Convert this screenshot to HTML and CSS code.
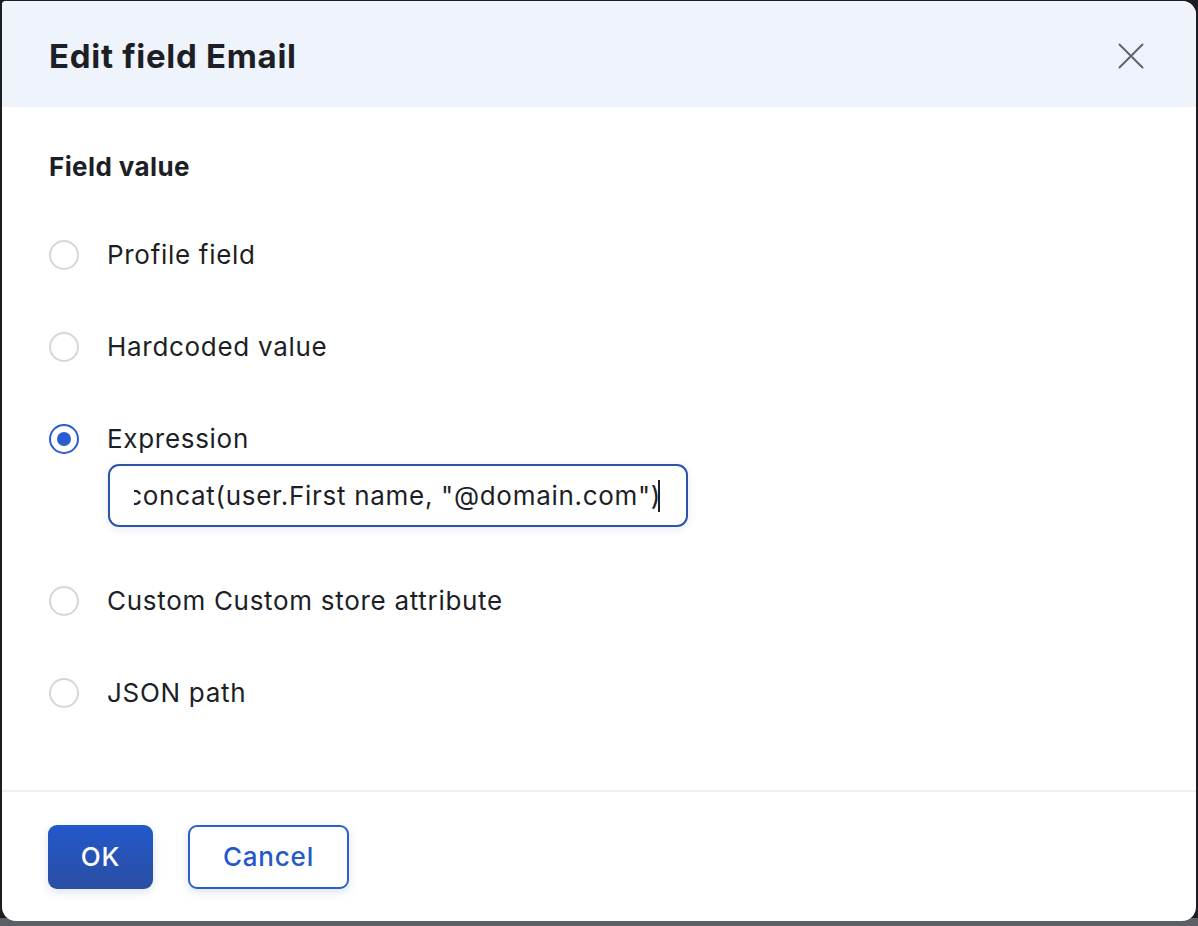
FILE: index.html
```html
<!DOCTYPE html>
<html lang="en">
<head>
  <meta charset="UTF-8">
  <title>Edit field Email</title>
  <link rel="stylesheet" href="styles.css">
</head>
<body>

  <div class="dialog">
    <header class="dialog-head">
      <h1>Edit field Email</h1>
      <button class="close" type="button" aria-label="Close">
        <svg width="26" height="26" viewBox="0 0 26 26">
          <path d="M1.5 1.5 L24.5 24.5 M24.5 1.5 L1.5 24.5" stroke="#60646d" stroke-width="2" stroke-linecap="round" fill="none"/>
        </svg>
      </button>
    </header>

    <section class="dialog-body">
      <h2>Field value</h2>

      <label class="option">
        <span class="radio"></span>
        <span class="label">Profile field</span>
      </label>

      <label class="option">
        <span class="radio"></span>
        <span class="label">Hardcoded value</span>
      </label>

      <label class="option option-expr">
        <span class="radio checked"></span>
        <span class="label">Expression</span>
      </label>
      <div class="expr-input">
        <div class="expr-scroll">
          <span class="expr-text">concat(user.First name, "@domain.com")</span><span class="caret"></span>
        </div>
      </div>

      <label class="option">
        <span class="radio"></span>
        <span class="label">Custom Custom store attribute</span>
      </label>

      <label class="option">
        <span class="radio"></span>
        <span class="label">JSON path</span>
      </label>
    </section>

    <footer class="dialog-foot">
      <button class="btn btn-primary" type="button">OK</button>
      <button class="btn btn-outline" type="button">Cancel</button>
    </footer>
  </div>

</body>
</html>
```

FILE: styles.css
```css
html, body {
  height: 100%;
}

body {
  margin: 0;
  background: linear-gradient(to bottom, #1b1d22 0, #1b1d22 918px, #5c6066 918px);
  font-family: Inter, 'Noto Sans', sans-serif;
  color: #1d1f27;
  overflow: hidden;
}

.dialog {
  margin: 1px 2px 0 2px;
  height: 920px;
  background: white;
  border-radius: 4px 14px 14px 14px;
  overflow: hidden;
  display: flex;
  flex-direction: column;
}

.dialog-head {
  height: 106px;
  box-sizing: border-box;
  background-color: #eff3fb;
  display: flex;
  align-items: center;
  justify-content: space-between;
  padding: 3px 52px 0 47px;
}

.dialog-head h1 {
  margin: 0;
  font-size: 33px;
  font-weight: 700;
  letter-spacing: 0.7px;
}

.close {
  background: none;
  border: none;
  padding: 0;
  width: 26px;
  height: 26px;
  cursor: pointer;
}

.dialog-body {
  flex: 1;
  padding: 44px 47px 0;
  border-bottom: 2px solid #f0f0f0;
}

.dialog-body h2 {
  margin: 0 0 56px;
  font-size: 26px;
  font-weight: 700;
  line-height: 32px;
  letter-spacing: 0.4px;
}

.option {
  display: flex;
  align-items: center;
  gap: 28px;
  height: 32px;
  margin-bottom: 60px;
  cursor: pointer;
}

.option-expr {
  margin-bottom: 9px;
}

.radio {
  width: 26px;
  height: 26px;
  border: 2px solid #d6d6d8;
  border-radius: 50%;
  flex-shrink: 0;
  position: relative;
}

.radio.checked {
  border-color: #2a5bd0;
}

.radio.checked::after {
  content: '';
  position: absolute;
  left: 6px;
  top: 6px;
  width: 14px;
  height: 14px;
  border-radius: 50%;
  background-color: #2a5bd0;
}

.label {
  font-size: 26px;
  line-height: 32px;
  letter-spacing: 0.7px;
  color: #1d1f27;
}

.expr-input {
  box-sizing: border-box;
  margin: 0 0 58px 59px;
  width: 580px;
  height: 63px;
  border: 2px solid #2a54ac;
  border-radius: 11px;
  box-shadow: 0 2px 8px rgba(40, 80, 160, 0.12);
  display: flex;
  align-items: center;
  padding: 0 26px 0 24px;
}

.expr-scroll {
  flex: 1;
  overflow: hidden;
  display: flex;
  align-items: center;
  justify-content: flex-end;
  white-space: nowrap;
}

.expr-text {
  font-size: 26px;
  letter-spacing: 0.7px;
  color: #1d1f27;
  flex-shrink: 0;
}

.caret {
  width: 2px;
  height: 32px;
  background-color: #1d1f27;
  margin-left: -3px;
  flex-shrink: 0;
}

.dialog-foot {
  height: 129px;
  display: flex;
  align-items: center;
  gap: 35px;
  padding: 0 46px;
}

.btn {
  height: 64px;
  border-radius: 9px;
  font-family: Inter, 'Noto Sans', sans-serif;
  font-size: 26px;
  font-weight: 500;
  letter-spacing: 0.8px;
  cursor: pointer;
  box-shadow: 0 3px 10px rgba(30, 60, 140, 0.15);
}

.btn-primary {
  width: 105px;
  background: linear-gradient(to bottom, #2359cb, #2a4ea3);
  color: white;
  border: none;
}

.btn-outline {
  width: 161px;
  background: white;
  color: #2459c8;
  border: 2px solid #2b5fd0;
}
```
